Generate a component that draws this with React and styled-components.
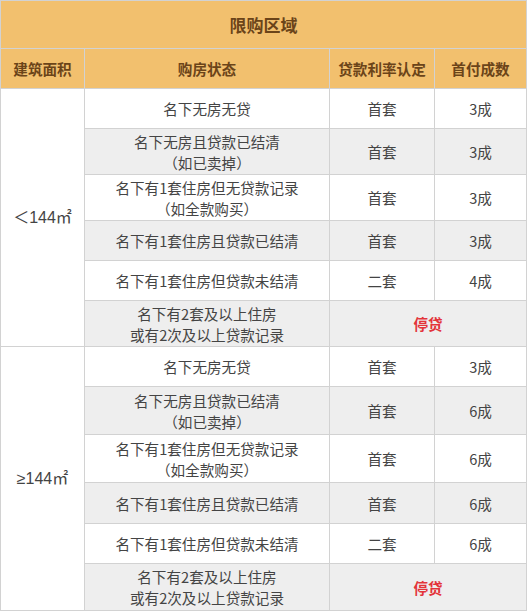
import React from 'react';
import styled, {createGlobalStyle} from 'styled-components';

const GlobalStyle = createGlobalStyle`
  html, body {
    margin: 0;
    padding: 0;
    background: #fff;
  }
  body {
    font-family: "Noto Sans CJK SC", "Noto Sans", sans-serif;
  }
`;

const Table = styled.table`
  width: 526px;
  border-collapse: collapse;
  table-layout: fixed;
  color: #444;
  font-size: 14.6px;
  line-height: 21px;
  td, th {
    border: 1px solid #d2d2d2;
    text-align: center;
    vertical-align: middle;
    padding: 0;
  }
`;

const TitleCell = styled.th`
  height: 47px;
  background: #f2c06e;
  color: #6b4419;
  font-size: 17px;
  font-weight: bold;
`;

const HeadCell = styled.th`
  height: 39px;
  background: #f2c06e;
  color: #6b4419;
  font-size: 14.6px;
  font-weight: bold;
`;

const Row = styled.tr`
  background: ${(p) => (p.$alt ? '#eeeeee' : '#ffffff')};
  td {
    height: ${(p) => p.$h - 1}px;
  }
`;

const AreaCell = styled.td`
  background: #fff;
  font-family: "Liberation Sans", "Noto Sans CJK SC", sans-serif;
  font-size: 16px;
  color: #444;
`;

const Stop = styled.td`
  color: #e3343a;
  font-weight: bold;
`;

const groups = [
  {
    area: '＜144㎡',
    rows: [
      {status: ['名下无房无贷'], rate: '首套', pay: '3成', h: 40},
      {status: ['名下无房且贷款已结清', '（如已卖掉）'], rate: '首套', pay: '3成', h: 46},
      {status: ['名下有1套住房但无贷款记录', '（如全款购买）'], rate: '首套', pay: '3成', h: 46},
      {status: ['名下有1套住房且贷款已结清'], rate: '首套', pay: '3成', h: 40},
      {status: ['名下有1套住房但贷款未结清'], rate: '二套', pay: '4成', h: 40},
      {status: ['名下有2套及以上住房', '或有2次及以上贷款记录'], stop: true, h: 46},
    ],
  },
  {
    area: '≥144㎡',
    rows: [
      {status: ['名下无房无贷'], rate: '首套', pay: '3成', h: 40},
      {status: ['名下无房且贷款已结清', '（如已卖掉）'], rate: '首套', pay: '6成', h: 48},
      {status: ['名下有1套住房但无贷款记录', '（如全款购买）'], rate: '首套', pay: '6成', h: 48},
      {status: ['名下有1套住房且贷款已结清'], rate: '首套', pay: '6成', h: 41},
      {status: ['名下有1套住房但贷款未结清'], rate: '二套', pay: '6成', h: 40},
      {status: ['名下有2套及以上住房', '或有2次及以上贷款记录'], stop: true, h: 47},
    ],
  },
];

function App() {
  return (
    <>
      <GlobalStyle />
      <Table>
        <colgroup>
          <col style={{width: 84}} />
          <col style={{width: 245}} />
          <col style={{width: 105}} />
          <col style={{width: 92}} />
        </colgroup>
        <thead>
          <tr>
            <TitleCell colSpan={4}>限购区域</TitleCell>
          </tr>
          <tr>
            <HeadCell>建筑面积</HeadCell>
            <HeadCell>购房状态</HeadCell>
            <HeadCell>贷款利率认定</HeadCell>
            <HeadCell>首付成数</HeadCell>
          </tr>
        </thead>
        <tbody>
          {groups.map((g) =>
            g.rows.map((r, i) => (
              <Row key={g.area + i} $alt={i % 2 === 1} $h={r.h}>
                {i === 0 && <AreaCell rowSpan={g.rows.length}>{g.area}</AreaCell>}
                <td>
                  {r.status.map((line) => (
                    <div key={line}>{line}</div>
                  ))}
                </td>
                {r.stop ? (
                  <Stop colSpan={2}>停贷</Stop>
                ) : (
                  <>
                    <td>{r.rate}</td>
                    <td>{r.pay}</td>
                  </>
                )}
              </Row>
            )),
          )}
        </tbody>
      </Table>
    </>
  );
}

export default App;
